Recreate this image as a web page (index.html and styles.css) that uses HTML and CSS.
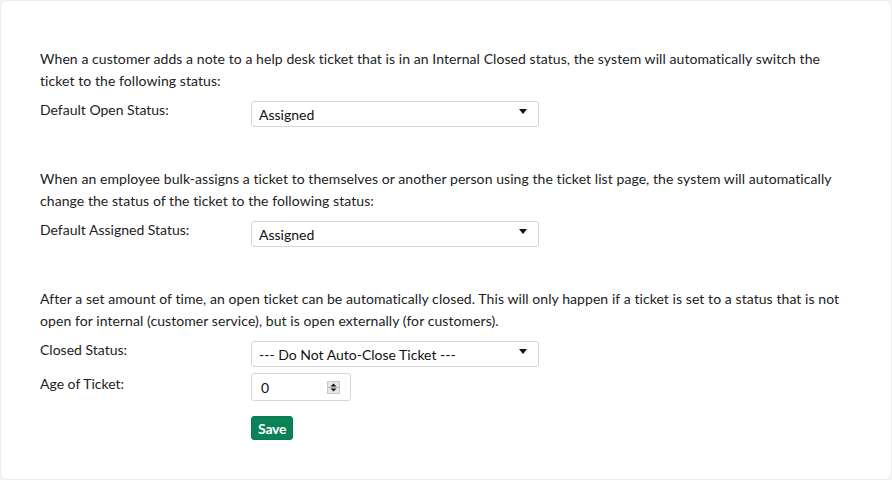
FILE: index.html
```html
<!DOCTYPE html>
<html>
<head>
<meta charset="utf-8">
<link rel="stylesheet" href="styles.css">
</head>
<body>
<div class="card">
  <section class="block">
    <p class="desc">When a customer adds a note to a help desk ticket that is in an Internal Closed status, the system will automatically switch the ticket to the following status:</p>
    <div class="row">
      <label class="lbl">Default Open Status:</label>
      <div class="select"><span>Assigned</span><i class="caret"></i></div>
    </div>
  </section>
  <section class="block">
    <p class="desc">When an employee bulk-assigns a ticket to themselves or another person using the ticket list page, the system will automatically change the status of the ticket to the following status:</p>
    <div class="row">
      <label class="lbl">Default Assigned Status:</label>
      <div class="select"><span>Assigned</span><i class="caret"></i></div>
    </div>
  </section>
  <section class="block">
    <p class="desc">After a set amount of time, an open ticket can be automatically closed. This will only happen if a ticket is set to a status that is not open for internal (customer service), but is open externally (for customers).</p>
    <div class="row">
      <label class="lbl">Closed Status:</label>
      <div class="select"><span>--- Do Not Auto-Close Ticket ---</span><i class="caret"></i></div>
    </div>
    <div class="row row-age">
      <label class="lbl">Age of Ticket:</label>
      <div class="number"><span>0</span>
        <span class="spin"><svg width="13" height="13" viewBox="0 0 13 13"><rect x="0.5" y="0.5" width="12" height="12" fill="#e6e6e6" stroke="#c8c8c8"/><line x1="1" y1="6.5" x2="12" y2="6.5" stroke="#bbb"/><path d="M3.5 5.5 L6.5 2.5 L9.5 5.5 Z" fill="#111"/><path d="M3.5 7.5 L6.5 10.5 L9.5 7.5 Z" fill="#111"/></svg></span>
      </div>
    </div>
    <div class="row row-save">
      <span class="lbl"></span>
      <button class="save">Save</button>
    </div>
  </section>
</div>
</body>
</html>
```
FILE: styles.css
```css
html, body {
  margin: 0;
  padding: 0;
  background: #f4f4f4;
}
body {
  font-family: Lato, "Open Sans", sans-serif;
  font-size: 14px;
  color: #222;
}
.card {
  box-sizing: border-box;
  width: 892px;
  height: 480px;
  background: #fff;
  border: 1px solid #ececec;
  border-radius: 7px;
  padding: 47px 39px 0 39px;
}
.block {
  margin-bottom: 41px;
}
.desc {
  margin: 0 0 9px 0;
  line-height: 22px;
  width: 806px;
  letter-spacing: 0.07px;
}
.row {
  display: flex;
  align-items: center;
}
.lbl {
  width: 211px;
  flex: none;
  line-height: 16px;
  margin-top: -8px;
}
.select {
  box-sizing: border-box;
  width: 288px;
  height: 26px;
  border: 1px solid #d6d6d6;
  border-radius: 3px;
  display: flex;
  align-items: center;
  justify-content: space-between;
  padding: 0 11px 0 7px;
  font-size: 14px;
  color: #111;
}
.caret {
  width: 0;
  height: 0;
  border-left: 4px solid transparent;
  border-right: 4px solid transparent;
  border-top: 5px solid #111;
  margin-top: -5px;
}
.row-age {
  margin-top: 6px;
}
.row-age .lbl {
  margin-top: -7px;
}
.number {
  box-sizing: border-box;
  width: 100px;
  height: 28px;
  border: 1px solid #d6d6d6;
  border-radius: 3px;
  display: flex;
  align-items: center;
  justify-content: space-between;
  padding: 0 10px 0 9px;
  font-size: 14px;
  color: #111;
}
.spin {
  display: flex;
}
.row-save {
  margin-top: 15px;
}
.row-save .lbl {
  margin-top: 0;
}
.save {
  box-sizing: border-box;
  height: 24px;
  padding: 0 6px;
  background: #0b8157;
  color: #fff;
  border: 1px solid #0a7a52;
  border-radius: 3px;
  font-family: Lato, sans-serif;
  font-size: 14px;
  font-weight: bold;
  letter-spacing: -0.2px;
}
```
